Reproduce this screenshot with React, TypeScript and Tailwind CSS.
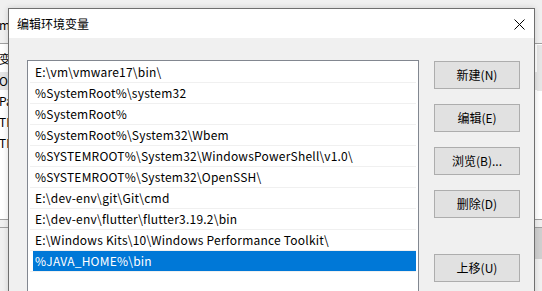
import React from "react";

const paths = [
  "E:\\vm\\vmware17\\bin\\",
  "%SystemRoot%\\system32",
  "%SystemRoot%",
  "%SystemRoot%\\System32\\Wbem",
  "%SYSTEMROOT%\\System32\\WindowsPowerShell\\v1.0\\",
  "%SYSTEMROOT%\\System32\\OpenSSH\\",
  "E:\\dev-env\\git\\Git\\cmd",
  "E:\\dev-env\\flutter\\flutter3.19.2\\bin",
  "E:\\Windows Kits\\10\\Windows Performance Toolkit\\",
  "%JAVA_HOME%\\bin",
];

const selected = 9;

function DialogButton({ label, className = "" }: { label: string; className?: string }) {
  return (
    <button className={`h-[28px] w-[86px] border border-[#adadad] bg-[#e1e1e1] text-[12px] leading-none text-black ${className}`}>
      {label}
    </button>
  );
}

// only a sliver of the parent window shows left of the dialog
function Peek({ text, className = "" }: { text: string; className?: string }) {
  return (
    <div className={`flex w-[8px] items-center overflow-hidden whitespace-nowrap ${className}`}>
      <span className="-ml-[1px]">{text}</span>
    </div>
  );
}

export default function App() {
  return (
    <div className="relative h-[291px] w-[542px] overflow-hidden bg-[#f0f0f0] font-['Noto_Sans_CJK_SC',sans-serif] text-[12px] text-black">
      {/* window behind the dialog (环境变量) */}
      <div className="absolute inset-0 flex flex-col">
        <div className="flex h-[43px] items-center bg-[#f0f0f0]">
          <Peek text="m" className="pt-[6px]" />
        </div>
        <div className="h-px bg-[#a0a0a0]" />
        <div className="flex h-[175px] flex-col bg-white">
          <Peek text="变量" className="h-[26px] !items-end pb-[2px]" />
          <div className="h-[2px]" />
          <div className="h-[18px] bg-[#e5e5e5]">
            <Peek text="OneDrive" className="h-full" />
          </div>
          <Peek text="Path" className="h-[21px]" />
          <Peek text="TEMP" className="h-[21px]" />
          <Peek text="TMP" className="h-[21px]" />
        </div>
        <div className="h-px bg-[#a0a0a0]" />
        <div className="h-[7px] bg-[#f0f0f0]" />
        <div className="h-px bg-[#a0a0a0]" />
        <div className="flex h-[31px] justify-end bg-[#f0f0f0]">
          <div className="w-[7px] bg-[#cfcfcf]" />
        </div>
        <div className="flex-1 bg-[#f0f0f0]" />
      </div>
      <div className="absolute right-0 top-[45px] h-[46px] w-[5px] bg-[#e6e6e6]" />

      {/* 编辑环境变量 dialog */}
      <div className="absolute left-[8px] top-[8px] flex h-[300px] w-[527px] flex-col border border-[#6f6f6f] bg-[#f0f0f0] shadow-[0_0_6px_rgba(0,0,0,0.15)]">
        <div className="flex h-[29px] items-center justify-between bg-white pl-[8px] pr-[9px]">
          <span className="pt-px">编辑环境变量</span>
          <svg width="11" height="11" viewBox="0 0 11 11" className="mt-px">
            <path d="M0.5 0.5 L10.5 10.5 M10.5 0.5 L0.5 10.5" stroke="#000" strokeWidth="1" />
          </svg>
        </div>
        <div className="flex gap-[15px] pl-[18px] pt-[22px]">
          <div className="h-[240px] w-[392px] border border-[#828790] bg-white px-[2px] pt-px">
            {paths.map((p, i) => (
              <div key={i} className="flex h-[21px] border-b border-[#f0f0f0]">
                <div
                  className={`ml-[3px] flex flex-1 items-center whitespace-nowrap pl-[2px] tracking-[0.22px] ${
                    i === selected ? "bg-[#0078d7] text-white" : ""
                  }`}
                >
                  {p}
                </div>
              </div>
            ))}
          </div>
          <div className="flex flex-col gap-[15px] pt-px">
            <DialogButton label="新建(N)" />
            <DialogButton label="编辑(E)" />
            <DialogButton label="浏览(B)..." />
            <DialogButton label="删除(D)" />
            <DialogButton label="上移(U)" className="mt-[21px]" />
          </div>
        </div>
      </div>
    </div>
  );
}
